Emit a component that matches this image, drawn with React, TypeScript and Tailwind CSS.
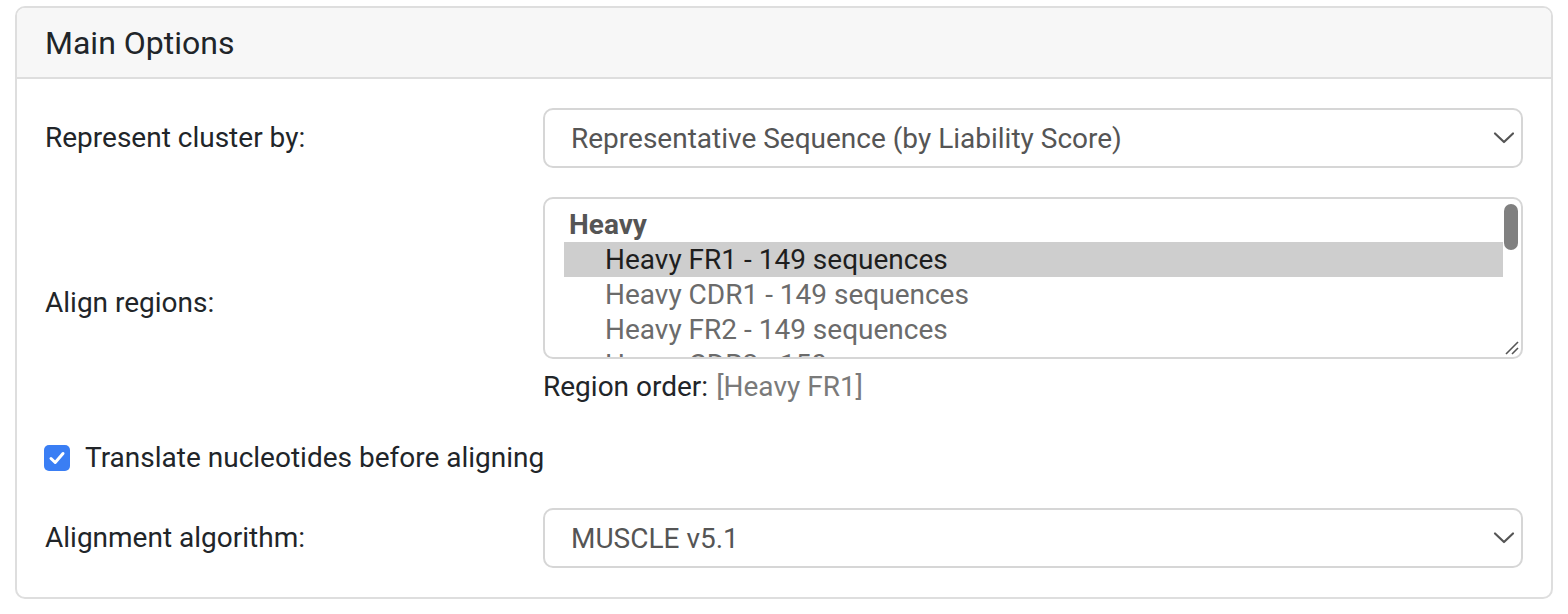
import React from "react";

function Chevron() {
  return (
    <svg width="22" height="14" viewBox="0 0 22 14" fill="none">
      <path d="M2 2.5 L11 11 L20 2.5" stroke="#555555" strokeWidth="2.2" strokeLinecap="round" strokeLinejoin="round" />
    </svg>
  );
}

function FakeSelect({ value }: { value: string }) {
  return (
    <div className="flex-1 h-[60px] border-2 border-[#d6d6d6] rounded-[10px] bg-white flex items-center justify-between pl-[26px] pr-[6px]">
      <span className="text-[28px] leading-none text-[#555555] mt-[2px]">{value}</span>
      <Chevron />
    </div>
  );
}

export default function App() {
  const items = [
    "Heavy FR1 - 149 sequences",
    "Heavy CDR1 - 149 sequences",
    "Heavy FR2 - 149 sequences",
    "Heavy CDR2 - 150 sequences",
  ];
  return (
    <div
      className="w-[1568px] h-[614px] bg-white px-[15px] pt-[6px] text-[#212529]"
      style={{ fontFamily: "Roboto, 'Liberation Sans', sans-serif" }}
    >
      <div className="border-2 border-[#dedede] rounded-[10px] overflow-hidden">
        <div className="h-[71px] bg-[#f7f7f7] border-b-2 border-[#dedede] flex items-center pl-[28px]">
          <span className="text-[32px] leading-none text-[#212529]">Main Options</span>
        </div>
        <div className="pl-[28px] pr-[28px] pt-[29px] pb-[29px] flex flex-col gap-[29px]">
          <div className="flex items-center">
            <div className="w-[498px] text-[28px] leading-none">Represent cluster by:</div>
            <FakeSelect value="Representative Sequence (by Liability Score)" />
          </div>

          <div className="flex items-center">
            <div className="w-[498px] text-[28px] leading-none">Align regions:</div>
            <div className="flex-1 flex flex-col">
              <div className="relative h-[162px] border-2 border-[#d6d6d6] rounded-[10px] bg-white overflow-hidden flex">
                <div className="flex-1 pl-[19px] pt-[8px] overflow-hidden">
                  <div className="h-[35px] flex items-center pl-[5px] text-[28px] font-bold text-[#555555]">Heavy</div>
                  {items.map((it, i) => (
                    <div
                      key={it}
                      className={
                        i === 0
                          ? "h-[35px] flex items-center pl-[41px] text-[28px] text-[#1e1e1e] bg-[#cecece] whitespace-nowrap"
                          : "h-[35px] flex items-center pl-[41px] text-[28px] text-[#6b6b6b] whitespace-nowrap"
                      }
                    >
                      {it}
                    </div>
                  ))}
                </div>
                <div className="w-[18px] relative">
                  <div className="absolute left-[1px] top-[5px] w-[14px] h-[46px] rounded-full bg-[#808080]" />
                </div>
                <svg className="absolute right-[2px] bottom-[2px]" width="16" height="16" viewBox="0 0 16 16">
                  <path d="M3 15 L15 3" stroke="#555" strokeWidth="1.6" />
                  <path d="M9 15 L15 9" stroke="#555" strokeWidth="1.6" />
                </svg>
              </div>
              <div className="mt-[7px] h-[42px] flex items-center text-[28px] leading-none">
                <span>Region order:</span>
                <span className="ml-[8px] text-[#7a7a7a]">[Heavy FR1]</span>
              </div>
            </div>
          </div>

          <div className="h-[42px] flex items-center">
            <div className="w-[26px] h-[26px] ml-[-1px] rounded-[5px] bg-[#3a7ef4] flex items-center justify-center">
              <svg width="18" height="18" viewBox="0 0 18 18" fill="none">
                <path d="M3 9.5 L7.2 13.5 L15 4.5" stroke="white" strokeWidth="3" strokeLinecap="round" strokeLinejoin="round" />
              </svg>
            </div>
            <span className="ml-[15px] text-[28px] leading-none">Translate nucleotides before aligning</span>
          </div>

          <div className="flex items-center">
            <div className="w-[498px] text-[28px] leading-none">Alignment algorithm:</div>
            <FakeSelect value="MUSCLE v5.1" />
          </div>
        </div>
      </div>
    </div>
  );
}
